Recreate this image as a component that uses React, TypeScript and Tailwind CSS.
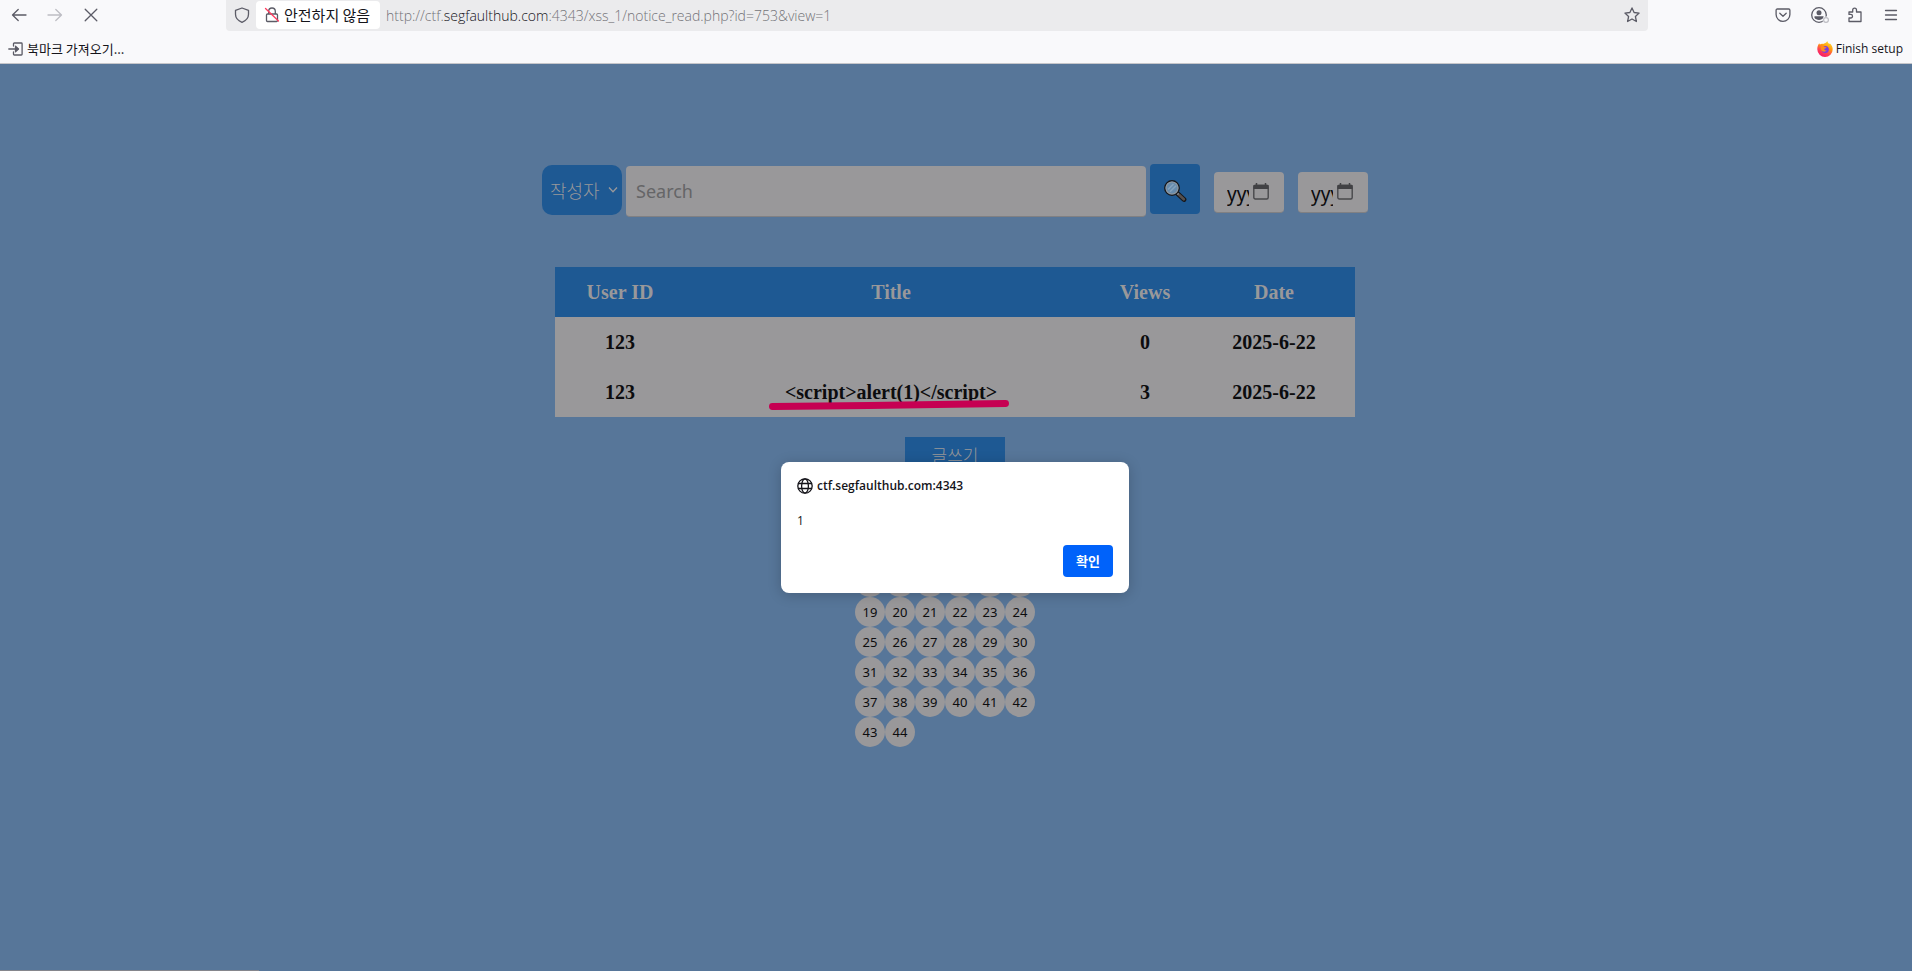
import React from 'react';

type Row = { user: string; title: string; views: string; date: string };

const rows: Row[] = [
  { user: '123', title: '', views: '0', date: '2025-6-22' },
  { user: '123', title: '<script>alert(1)</script>', views: '3', date: '2025-6-22' },
];

const pages = Array.from({ length: 44 }, (_, i) => i + 1);

function Icon({ children, className = '' }: { children: React.ReactNode; className?: string }) {
  return (
    <svg
      viewBox="0 0 16 16"
      className={`h-4 w-4 shrink-0 ${className}`}
      fill="none"
      stroke="currentColor"
      strokeWidth="1.3"
      strokeLinecap="round"
      strokeLinejoin="round"
      aria-hidden="true"
    >
      {children}
    </svg>
  );
}

function Toolbar() {
  return (
    <div className="flex h-[31px] items-start text-[#5b5b66]">
      <div className="flex h-[30px] w-[226px] shrink-0 items-center gap-5 pl-[11px]">
        <button aria-label="뒤로">
          <Icon>
            <path d="M15 8H1.5M7.2 2.5L1.5 8l5.7 5.5" />
          </Icon>
        </button>
        <button aria-label="앞으로" className="text-[#bdbdc3]">
          <Icon>
            <path d="M1 8h13.5M8.8 2.5L14.5 8l-5.7 5.5" />
          </Icon>
        </button>
        <button aria-label="중지">
          <Icon>
            <path d="M2.2 2.2l11.6 11.6M13.8 2.2L2.2 13.8" />
          </Icon>
        </button>
      </div>
      <div className="flex h-[31px] min-w-0 flex-1 items-start rounded-b-[4px] bg-[#ebebed]">
        <div className="flex h-[30px] w-[30px] items-center justify-end pr-[6px]">
          <Icon>
            <path d="M8 1l6.500 2.300v3.900c0 3.800-3 6.600-6.500 8.100C4.500 13.800 1.500 11 1.500 7.200V3.300z" />
          </Icon>
        </div>
        <button className="mt-px flex h-7 w-[124px] shrink-0 items-center gap-1 rounded-[4px] bg-white pl-2 font-['Noto_Sans_CJK_KR',sans-serif] text-[15px] leading-5 whitespace-nowrap text-[#15141a]">
          <Icon className="text-[#5b5b66]">
            <path d="M4.700 7V4.300a3.300 3.300 0 0 1 6.600 0V7M3.500 7h9a1 1 0 0 1 1 1v5.500a1 1 0 0 1-1 1h-9a1 1 0 0 1-1-1V8a1 1 0 0 1 1-1z" />
            <path d="M1.500 1.500l13 12.500" stroke="#ff3b5f" />
          </Icon>
          안전하지 않음
        </button>
        <div className="flex h-[31px] min-w-0 flex-1 items-center pl-[6px] font-['Open_Sans',sans-serif] text-[14px] leading-5 font-light whitespace-nowrap text-[#737378]">
          <span>
            http://ctf.<span className="text-[#15141a]">segfaulthub.com</span>:4343/xss_1/notice_read.php?id=753&amp;view=1
          </span>
        </div>
        <button aria-label="북마크에 추가" className="flex h-[30px] w-8 items-center justify-center">
          <Icon>
            <path d="M8 .9l2.100 4.600 5 .6-3.700 3.400 1 5L8 12l-4.400 2.500 1-5L.9 6.100l5-.6z" />
          </Icon>
        </button>
      </div>
      <div className="flex h-[30px] w-[264px] shrink-0 items-center justify-end gap-5 pr-[13px]">
        <button aria-label="Pocket에 저장">
          <Icon>
            <path d="M2.300 2h11.400a1.200 1.200 0 0 1 1.200 1.200v4.300a6.900 6.900 0 0 1-13.800 0V3.200A1.200 1.200 0 0 1 2.300 2z" />
            <path d="M4.800 6.300L8 9.300l3.200-3" />
          </Icon>
        </button>
        <button aria-label="계정">
          <svg viewBox="0 0 16 16" className="h-4 w-4 overflow-visible" fill="none" aria-hidden="true">
            <circle cx="8" cy="8" r="7.300" stroke="#5b5b66" strokeWidth="1.300" />
            <circle cx="8" cy="5.700" r="2.500" fill="#5b5b66" />
            <path d="M3.500 9.300h9v1.500c-.8 1.300-2.500 2.200-4.500 2.200s-3.700-.9-4.500-2.200z" fill="#5b5b66" />
            <circle cx="15" cy="13" r="3.500" fill="#f9f9fb" />
            <circle cx="15" cy="13" r="2.400" stroke="#bdbdc3" strokeWidth="1.200" />
          </svg>
        </button>
        <button aria-label="확장 기능">
          <Icon>
            <path d="M2 5h3.700V3a1.900 1.900 0 0 1 3.800 0v2H14v9.500H2V11h1.700a1.800 1.800 0 0 0 0-3.600H2z" />
          </Icon>
        </button>
        <button aria-label="메뉴">
          <Icon>
            <path d="M2.500 3.500h11M2.500 8h11M2.500 12.500h11" />
          </Icon>
        </button>
      </div>
    </div>
  );
}

function FirefoxLogo() {
  return (
    <svg viewBox="0 0 16 16" className="h-4 w-4" aria-hidden="true">
      <defs>
        <linearGradient id="fx" x1="0.800" y1="0" x2="0.300" y2="1">
          <stop offset="0" stopColor="#ffe02e" />
          <stop offset="0.400" stopColor="#ff980e" />
          <stop offset="0.700" stopColor="#ff4055" />
          <stop offset="1" stopColor="#f5156c" />
        </linearGradient>
      </defs>
      <path
        d="M10.300 0c.2 1.500 1.200 2.200 2.100 3.100.3-.1.300-.5.300-.9 1.800 1.400 3 3.700 3 6A7.700 7.700 0 0 1 .3 8.300c0-2.500.7-4.400 2-6 .1.600.3 1 .6 1.300C4 2.700 5.200 2.800 6 2.900 7.500 2.600 9.300 2 10.300 0z"
        fill="url(#fx)"
      />
      <circle cx="8.300" cy="8.400" r="3.500" fill="#7a3ce0" />
      <path d="M3.800 5.200c1.500-.7 3-.3 3.800.7l2 .3c-.3 1-1.300 1.200-2 1.300-.8 1.500.6 2.500 2.200 1.800-1.300 2.500-5.500 1.600-6-1.500z" fill="#ff8a1c" />
    </svg>
  );
}

function BookmarksBar() {
  return (
    <div className="flex h-8 items-center justify-between pt-[3px] pr-[9px] pl-2 text-[#15141a]">
      <a href="#import" className="flex items-center gap-[3px] font-['Noto_Sans_CJK_KR',sans-serif] text-[13px] leading-4">
        <Icon className="text-[#5b5b66]">
          <path d="M5.500 5V2.800c0-.5.300-.8.800-.8h7c.5 0 .8.300.8.800v10.400c0 .5-.3.800-.8.800h-7c-.5 0-.8-.3-.8-.8V11M.8 8H10" />
          <path d="M7.500 5.200L10.500 8l-3 2.800z" fill="currentColor" />
        </Icon>
        북마크 가져오기...
      </a>
      <a href="#setup" className="flex items-center gap-[3px] font-['Open_Sans',sans-serif] text-[12px] leading-4">
        <FirefoxLogo />
        Finish setup
      </a>
    </div>
  );
}

function MagnifierIcon() {
  return (
    <svg viewBox="0 0 24 24" className="mt-1 h-6 w-6" aria-hidden="true">
      <path d="M14.500 14.500l6.500 6" stroke="#17181b" strokeWidth="4.800" strokeLinecap="round" />
      <path d="M16 15.800l4.800 4.500" stroke="#56504f" strokeWidth="2.600" strokeLinecap="round" />
      <path d="M13 13l2.500 2.500" stroke="#8b8b8d" strokeWidth="2" />
      <circle cx="9" cy="9" r="7.200" fill="#668bad" stroke="#17181b" strokeWidth="1.500" />
      <circle cx="9" cy="9" r="6" fill="none" stroke="#8d969f" strokeWidth="1.100" />
      <path d="M5 10.500L10.500 5M7 12.800L13 6.800" stroke="#84a2bd" strokeWidth="1.600" />
    </svg>
  );
}

function DateField({ label }: { label: string }) {
  return (
    <div className="mt-2 flex h-[41px] w-[70px] items-center rounded-[4px] border-b border-[#808083] bg-[#99989a] pl-[13px]">
      <input
        type="text"
        aria-label={label}
        placeholder="yyyy"
        className="mt-1 w-[22px] bg-transparent font-['Noto_Sans',sans-serif] text-[19px] leading-6 outline-none placeholder:text-[#0c0c0e]"
      />
      <button aria-label={`${label} 선택`} className="mb-px ml-1">
        <svg viewBox="0 0 16 17" className="h-[17px] w-4" fill="none" aria-hidden="true">
          <path d="M3.500 0v3M12.500 0v3" stroke="#414144" strokeWidth="1.500" />
          <rect x="0.800" y="2.300" width="14.400" height="13.700" rx="1.500" stroke="#48484b" strokeWidth="1.400" />
          <path d="M.5 2h15v4H.5z" fill="#414144" />
        </svg>
      </button>
    </div>
  );
}

function SearchForm() {
  return (
    <form className="flex items-start" onSubmit={(e) => e.preventDefault()}>
      <div className="relative mt-px w-20">
        <select
          aria-label="검색 조건"
          className="h-[50px] w-full appearance-none rounded-[10px] bg-[#1e5993] pl-2 font-['Noto_Sans_CJK_KR',sans-serif] text-[18px] font-light text-[#99989a] outline-none"
        >
          <option>작성자</option>
        </select>
        <svg viewBox="0 0 8 6" className="pointer-events-none absolute top-[22px] right-[5px] h-[6px] w-2 overflow-visible" fill="none" aria-hidden="true">
          <path d="M0 .5L4 4.800 8 .5" stroke="#99989a" strokeWidth="1.300" />
        </svg>
      </div>
      <input
        type="text"
        aria-label="Search"
        placeholder="Search"
        className="mt-[2px] ml-1 h-[51px] w-[520px] rounded-[4px] border-b border-[#808083] bg-[#99989a] px-[10px] font-['Noto_Sans',sans-serif] text-[18px] outline-none placeholder:text-[#656567]"
      />
      <button aria-label="검색" className="ml-1 flex h-[50px] w-[50px] items-center justify-center rounded-[4px] bg-[#1e5993]">
        <MagnifierIcon />
      </button>
      <div className="ml-[14px] flex gap-[14px]">
        <DateField label="시작일" />
        <DateField label="종료일" />
      </div>
    </form>
  );
}

function NoticeTable() {
  return (
    <table className="mt-[50px] w-[800px] table-fixed border-collapse text-center font-['Liberation_Serif',serif] text-[20px] leading-6 font-bold">
      <colgroup>
        <col className="w-[130px]" />
        <col />
        <col className="w-24" />
        <col className="w-[162px]" />
      </colgroup>
      <thead className="bg-[#1e5993] text-[#99989a]">
        <tr className="h-[50px]">
          <th>User ID</th>
          <th>Title</th>
          <th>Views</th>
          <th>Date</th>
        </tr>
      </thead>
      <tbody className="bg-[#99989a] text-[#0c0c0e]">
        {rows.map((row, i) => (
          <tr key={i} className="h-[50px]">
            <td>{row.user}</td>
            <td>
              {row.title && (
                <a href="#notice" className="relative inline-block">
                  {row.title}
                  <svg viewBox="0 0 240 12" className="absolute top-[19px] -left-4 h-3 w-[240px]" aria-hidden="true">
                    <path d="M3.500 7.500L100 6.500L236.500 4.500" fill="none" stroke="#c60052" strokeWidth="7" strokeLinecap="round" strokeLinejoin="round" />
                  </svg>
                </a>
              )}
            </td>
            <td>{row.views}</td>
            <td>{row.date}</td>
          </tr>
        ))}
      </tbody>
    </table>
  );
}

function AlertDialog() {
  return (
    <div
      role="alertdialog"
      aria-labelledby="alert-origin"
      aria-describedby="alert-message"
      className="absolute top-[398px] left-1/2 -ml-[175px] flex w-[348px] flex-col rounded-[8px] bg-white p-4 font-['Open_Sans',sans-serif] text-[12px] leading-4 text-[#15141a] shadow-[0_2px_14px_rgba(0,0,0,0.2)]"
    >
      <div id="alert-origin" className="flex items-center gap-1 font-semibold">
        <Icon>
          <circle cx="8" cy="8" r="7.200" />
          <ellipse cx="8" cy="8" rx="3.400" ry="7.200" />
          <path d="M1.500 5.500h13M1.500 10.500h13" />
        </Icon>
        ctf.segfaulthub.com:4343
      </div>
      <p id="alert-message" className="mt-[19px]">
        1
      </p>
      <button className="mt-4 h-8 w-[50px] self-end rounded-[4px] bg-[#0062fa] font-['Noto_Sans_CJK_KR',sans-serif] text-[13px] font-bold text-white">
        확인
      </button>
    </div>
  );
}

export default function App() {
  return (
    <div className="relative flex min-h-screen flex-col bg-[#577699]">
      <header className="h-16 border-b border-[#c6c6ca] bg-[#f9f9fb]">
        <Toolbar />
        <BookmarksBar />
      </header>
      <main className="relative flex flex-1 flex-col items-center pt-[100px]">
        <div className="flex flex-col items-center pr-[2px]">
          <SearchForm />
          <NoticeTable />
          <button className="mt-5 h-10 w-[100px] bg-[#1e5993] pb-1 font-['Noto_Sans_CJK_KR',sans-serif] text-[17px] font-light text-[#99989a]">
            글쓰기
          </button>
          <nav aria-label="페이지" className="mt-[30px] mr-5 grid grid-cols-6">
            {pages.map((page) => (
              <a
                key={page}
                href={`#page-${page}`}
                className="flex h-[30px] w-[30px] items-center justify-center rounded-full bg-[#99989a] font-['Noto_Sans',sans-serif] text-[13px] leading-4 text-[#0c0c0e]"
              >
                {page}
              </a>
            ))}
          </nav>
        </div>
        <AlertDialog />
      </main>
      <div className="absolute bottom-0 left-0 h-px w-[259px] bg-[#85868c]" />
    </div>
  );
}
